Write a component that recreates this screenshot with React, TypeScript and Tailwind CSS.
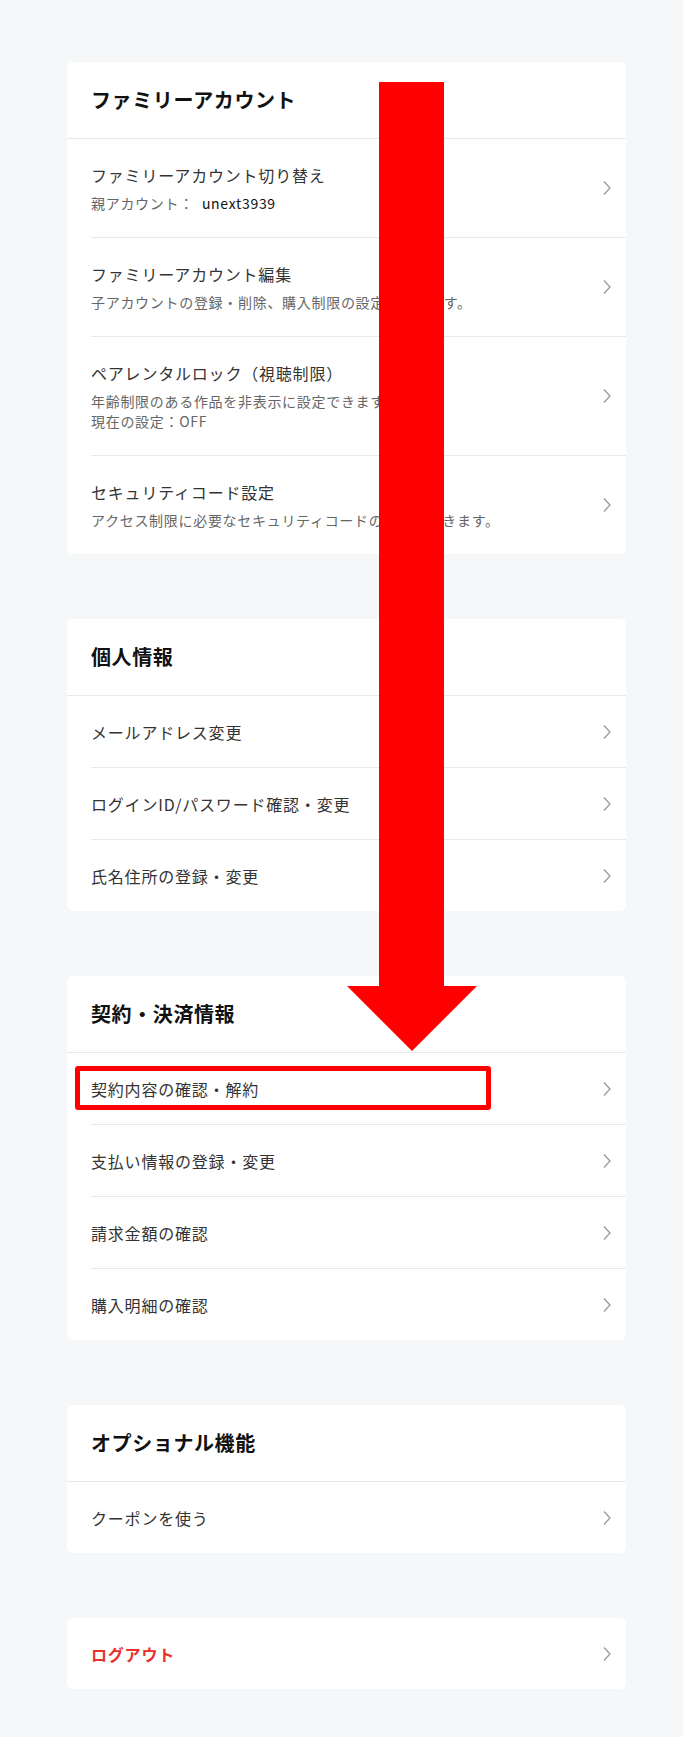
import React from "react";

const font = { fontFamily: '"Noto Sans CJK JP", "Noto Sans", sans-serif' };

function Chevron() {
  return (
    <svg width="10" height="16" viewBox="0 0 10 16" className="shrink-0">
      <path d="M2 1.5 L8 8 L2 14.5" fill="none" stroke="#9a9a9a" strokeWidth="1.3" />
    </svg>
  );
}

type Row = { title: string; subs?: React.ReactNode[]; red?: boolean; highlight?: boolean };

function RowItem({ row, first }: { row: Row; first: boolean }) {
  return (
    <div className="relative pl-6">
      <div className={`flex items-center justify-between pr-[14px] ${first ? "" : "border-t border-[#e9e9ea]"} ${row.subs ? "py-6" : "py-[23.5px]"}`}>
        <div className="flex flex-col gap-[6px]">
          <div className={`text-[16px] leading-6 tracking-[0.05em] ${row.red ? "text-[#e8302c] font-bold" : "text-[#333333]"}`}>
            {row.title}
          </div>
          {row.subs && (
            <div className="flex flex-col">
              {row.subs.map((s, i) => (
                <div key={i} className="text-[14px] leading-5 tracking-[0.05em] text-[#666666]">
                  {s}
                </div>
              ))}
            </div>
          )}
        </div>
        <Chevron />
      </div>
      {row.highlight && (
        <div className="absolute left-[8px] top-[13px] w-[416px] h-[44px] border-[5px] border-[#ff0000] rounded-[3px]" />
      )}
    </div>
  );
}

function Card({ title, rows }: { title?: string; rows: Row[] }) {
  return (
    <div className="bg-white rounded-[6px] overflow-hidden">
      {title && (
        <div className="px-6 py-6 border-b border-[#e9e9ea]">
          <div className="text-[20px] leading-7 font-bold tracking-[0.03em] text-[#111111]">{title}</div>
        </div>
      )}
      {rows.map((r, i) => (
        <RowItem key={i} row={r} first={i === 0} />
      ))}
    </div>
  );
}

export default function App() {
  return (
    <div className="relative min-h-[1737px] w-[683px] bg-[#f6f7f9]" style={font}>
      <div className="ml-[67px] w-[559px] pt-[62px] flex flex-col gap-[65px]">
        <Card
          title="ファミリーアカウント"
          rows={[
            {
              title: "ファミリーアカウント切り替え",
              subs: [
                <span>
                  親アカウント：<span className="ml-2 text-[#111111]">unext3939</span>
                </span>,
              ],
            },
            { title: "ファミリーアカウント編集", subs: ["子アカウントの登録・削除、購入制限の設定ができます。"] },
            {
              title: "ペアレンタルロック（視聴制限）",
              subs: ["年齢制限のある作品を非表示に設定できます。", "現在の設定：OFF"],
            },
            { title: "セキュリティコード設定", subs: ["アクセス制限に必要なセキュリティコードの設定ができます。"] },
          ]}
        />
        <Card
          title="個人情報"
          rows={[
            { title: "メールアドレス変更" },
            { title: "ログインID/パスワード確認・変更" },
            { title: "氏名住所の登録・変更" },
          ]}
        />
        <Card
          title="契約・決済情報"
          rows={[
            { title: "契約内容の確認・解約", highlight: true },
            { title: "支払い情報の登録・変更" },
            { title: "請求金額の確認" },
            { title: "購入明細の確認" },
          ]}
        />
        <Card title="オプショナル機能" rows={[{ title: "クーポンを使う" }]} />
        <Card rows={[{ title: "ログアウト", red: true }]} />
      </div>
      <svg
        className="absolute left-[347px] top-[82px] pointer-events-none"
        width="130"
        height="969"
        viewBox="0 0 130 969"
      >
        <polygon points="32,0 97,0 97,904 130,904 65,969 0,904 32,904" fill="#ff0000" />
      </svg>
    </div>
  );
}
